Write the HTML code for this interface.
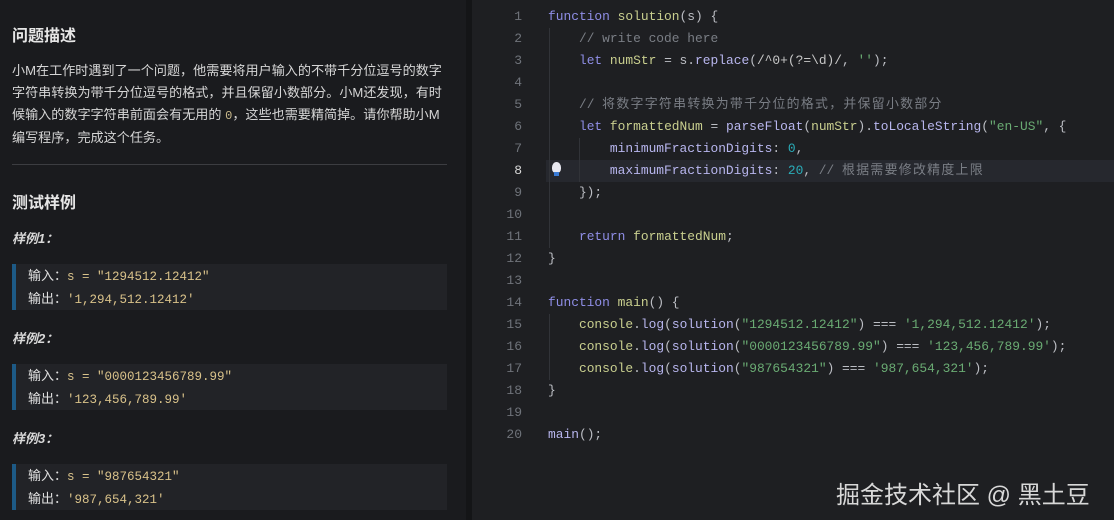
<!DOCTYPE html>
<html><head><meta charset="utf-8"><style>
*{margin:0;padding:0;box-sizing:border-box}
body{width:1114px;height:520px;overflow:hidden;background:#1e1f22;position:relative;font-family:"Liberation Sans","Noto Sans CJK SC",sans-serif}
#left{position:absolute;left:0;top:0;width:466px;height:520px;background:#1a1b1e;color:#d4d4d4}
#sep{position:absolute;left:466px;top:0;width:6px;height:520px;background:#141517}
.h{position:absolute;left:12px;font-size:16px;font-weight:bold;color:#e6e6e6}
.p{position:absolute;left:12px;top:60px;width:440px;font-size:13.1px;line-height:22px;color:#d6d6d6}
.p code{font-family:"Liberation Mono",monospace;color:#c8b88a;font-size:12px}
.hr{position:absolute;left:12px;top:164px;width:435px;height:1px;background:#3c3d41}
.ex{position:absolute;left:12px;font-size:13px;font-style:italic;font-weight:bold;color:#d8d8d8}
.box{position:absolute;left:12px;width:435px;height:46px;background:#222327;border-left:4px solid #1d5a86;padding-left:12px;font-size:13px;line-height:22px;color:#e0e0e0;padding-top:1px}
.box .m{font-family:"Liberation Mono",monospace;color:#d9c28a;font-size:12.5px}
#code{position:absolute;left:472px;top:0;width:642px;height:520px;font-family:"Liberation Mono","Noto Sans CJK SC",monospace;font-size:12.9px;color:#bcbec4}
.hl{position:absolute;left:74px;top:160px;width:568px;height:22px;background:#26282e}
.ln{position:absolute;left:0;width:50px;text-align:right;color:#6f737a;height:22px;line-height:22px;font-size:13px}
.cl{position:absolute;left:76px;height:22px;line-height:22px;white-space:pre}
.g{position:absolute;width:1px;background:#313338}
.k{color:#8f8ee6}.v{color:#c9cf8f}.f{color:#b8b6ee}.s{color:#6aab73}.n{color:#2aacb8}.c{color:#7a7e85}.cj{letter-spacing:1.3px}.r{color:#c7c7c7}
#wm{position:absolute;left:836px;top:475px;font-size:24px;color:#d8d8d8;font-family:"Liberation Sans","Noto Sans CJK SC",sans-serif}
</style></head><body>
<div id="left">
<div class="h" style="top:22px">问题描述</div>
<div class="p">小M在工作时遇到了一个问题，他需要将用户输入的不带千分位逗号的数字字符串转换为带千分位逗号的格式，并且保留小数部分。小M还发现，有时候输入的数字字符串前面会有无用的 <code>0</code>，这些也需要精简掉。请你帮助小M编写程序，完成这个任务。</div>
<div class="hr"></div>
<div class="h" style="top:189px">测试样例</div>
<div class="ex" style="top:228px">样例1：</div>
<div class="box" style="top:264px">输入：<span class="m">s = "1294512.12412"</span><br>输出：<span class="m">'1,294,512.12412'</span></div>
<div class="ex" style="top:328px">样例2：</div>
<div class="box" style="top:364px">输入：<span class="m">s = "0000123456789.99"</span><br>输出：<span class="m">'123,456,789.99'</span></div>
<div class="ex" style="top:428px">样例3：</div>
<div class="box" style="top:464px">输入：<span class="m">s = "987654321"</span><br>输出：<span class="m">'987,654,321'</span></div>
</div>
<div id="sep"></div>
<div id="code">
<div class="hl"></div>
<div class="g" style="left:77px;top:28px;height:220px"></div>
<div class="g" style="left:107px;top:138px;height:44px"></div>
<div class="g" style="left:77px;top:314px;height:66px"></div>
<div style="position:absolute;left:80px;top:162px;width:9px;height:11px;border-radius:50% 50% 40% 40%;background:#e8e8f0"></div>
<div style="position:absolute;left:82px;top:172px;width:5px;height:4px;background:#3a7bd5"></div>
<div class="ln" style="top:6px">1</div><div class="ln" style="top:28px">2</div><div class="ln" style="top:50px">3</div><div class="ln" style="top:72px">4</div><div class="ln" style="top:94px">5</div><div class="ln" style="top:116px">6</div><div class="ln" style="top:138px">7</div><div class="ln" style="top:160px;color:#d8d8d8">8</div><div class="ln" style="top:182px">9</div><div class="ln" style="top:204px">10</div><div class="ln" style="top:226px">11</div><div class="ln" style="top:248px">12</div><div class="ln" style="top:270px">13</div><div class="ln" style="top:292px">14</div><div class="ln" style="top:314px">15</div><div class="ln" style="top:336px">16</div><div class="ln" style="top:358px">17</div><div class="ln" style="top:380px">18</div><div class="ln" style="top:402px">19</div><div class="ln" style="top:424px">20</div>
<div class="cl" style="top:6px"><span class="k">function</span> <span class="v">solution</span>(s) {</div>
<div class="cl" style="top:28px">    <span class="c">// write code here</span></div>
<div class="cl" style="top:50px">    <span class="k">let</span> <span class="v">numStr</span> = s.<span class="f">replace</span>(<span class="r">/^0+(?=\d)/</span>, <span class="s">''</span>);</div>
<div class="cl" style="top:94px">    <span class="c">// <span class="cj">将数字字符串转换为带千分位的格式，并保留小数部分</span></span></div>
<div class="cl" style="top:116px">    <span class="k">let</span> <span class="v">formattedNum</span> = <span class="f">parseFloat</span>(<span class="v">numStr</span>).<span class="f">toLocaleString</span>(<span class="s">"en-US"</span>, {</div>
<div class="cl" style="top:138px">        <span class="f">minimumFractionDigits</span>: <span class="n">0</span>,</div>
<div class="cl" style="top:160px">        <span class="f">maximumFractionDigits</span>: <span class="n">20</span>, <span class="c">// <span class="cj">根据需要修改精度上限</span></span></div>
<div class="cl" style="top:182px">    });</div>
<div class="cl" style="top:226px">    <span class="k">return</span> <span class="v">formattedNum</span>;</div>
<div class="cl" style="top:248px">}</div>
<div class="cl" style="top:292px"><span class="k">function</span> <span class="v">main</span>() {</div>
<div class="cl" style="top:314px">    <span class="v">console</span>.<span class="f">log</span>(<span class="f">solution</span>(<span class="s">"1294512.12412"</span>) === <span class="s">'1,294,512.12412'</span>);</div>
<div class="cl" style="top:336px">    <span class="v">console</span>.<span class="f">log</span>(<span class="f">solution</span>(<span class="s">"0000123456789.99"</span>) === <span class="s">'123,456,789.99'</span>);</div>
<div class="cl" style="top:358px">    <span class="v">console</span>.<span class="f">log</span>(<span class="f">solution</span>(<span class="s">"987654321"</span>) === <span class="s">'987,654,321'</span>);</div>
<div class="cl" style="top:380px">}</div>
<div class="cl" style="top:424px"><span class="f">main</span>();</div>
</div>
<div id="wm">掘金技术社区 @ 黑土豆</div>
</body></html>
